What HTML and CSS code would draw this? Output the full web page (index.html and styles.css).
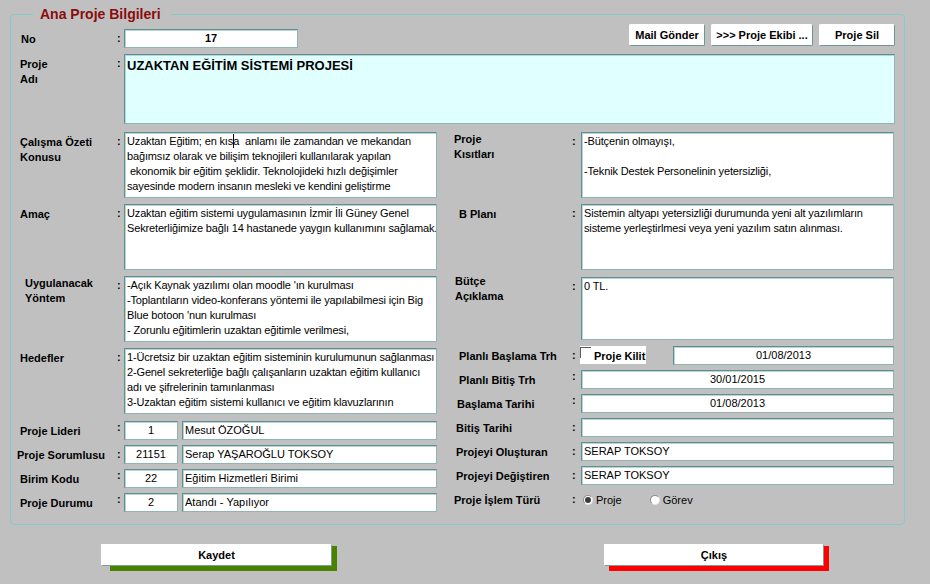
FILE: index.html
```html
<!DOCTYPE html>
<html lang="tr">
<head>
<meta charset="utf-8">
<title>Ana Proje Bilgileri</title>
<link rel="stylesheet" href="styles.css">
</head>
<body>
<div class="panel">
  <div class="legend">Ana Proje Bilgileri</div>

  <div class="toprow">
    <div class="lbl l-no">No</div>
    <div class="colon c-no">:</div>
    <div class="fld no">17</div>
    <div class="actions">
      <button class="btn b-mail">Mail Gönder</button>
      <button class="btn b-team">&gt;&gt;&gt; Proje Ekibi ...</button>
      <button class="btn b-del">Proje Sil</button>
    </div>
  </div>

  <div class="row lrow r-name">
    <div class="lbl">Proje<br>Adı</div>
    <div class="colon">:</div>
    <div class="ta name">UZAKTAN EĞİTİM SİSTEMİ PROJESİ</div>
  </div>

  <div class="cols">
    <div class="col left">
      <div class="row lrow">
        <div class="lbl">Çalışma Özeti<br>Konusu</div>
        <div class="colon">:</div>
        <div class="ta">Uzaktan Eğitim; en kıs<span class="caret"></span>a  anlamı ile zamandan ve mekandan<br>bağımsız olarak ve bilişim teknojileri kullanılarak yapılan<br> ekonomik bir eğitim şeklidir. Teknolojideki hızlı değişimler<br>sayesinde modern insanın mesleki ve kendini geliştirme</div>
      </div>
      <div class="row lrow">
        <div class="lbl">Amaç</div>
        <div class="colon">:</div>
        <div class="ta">Uzaktan eğitim sistemi uygulamasının İzmir İli Güney Genel<br>Sekreterliğimize bağlı 14 hastanede yaygın kullanımını sağlamak.</div>
      </div>
      <div class="row lrow">
        <div class="lbl ind up">Uygulanacak<br>Yöntem</div>
        <div class="colon">:</div>
        <div class="ta">-Açık Kaynak yazılımı olan moodle 'ın kurulması<br>-Toplantıların video-konferans yöntemi ile yapılabilmesi için Big<br>Blue botoon 'nun kurulması<br>- Zorunlu eğitimlerin uzaktan eğitimle verilmesi,</div>
      </div>
      <div class="row lrow">
        <div class="lbl">Hedefler</div>
        <div class="colon">:</div>
        <div class="ta">1-Ücretsiz bir uzaktan eğitim sisteminin kurulumunun sağlanması<br>2-Genel sekreterliğe bağlı çalışanların uzaktan eğitim kullanıcı<br>adı ve şifrelerinin tamınlanması<br>3-Uzaktan eğitim sistemi kullanıcı ve eğitim klavuzlarının</div>
      </div>
      <div class="group lgroup">
        <div class="srow lsrow">
          <div class="lbl">Proje Lideri</div>
          <div class="colon hi">:</div>
          <div class="fld c">1</div>
          <div class="fld">Mesut ÖZOĞUL</div>
        </div>
        <div class="srow lsrow">
          <div class="lbl out">Proje Sorumlusu</div>
          <div class="colon">:</div>
          <div class="fld c">21151</div>
          <div class="fld">Serap YAŞAROĞLU TOKSOY</div>
        </div>
        <div class="srow lsrow">
          <div class="lbl">Birim Kodu</div>
          <div class="colon hi">:</div>
          <div class="fld c">22</div>
          <div class="fld">Eğitim Hizmetleri Birimi</div>
        </div>
        <div class="srow lsrow">
          <div class="lbl">Proje Durumu</div>
          <div class="colon hi">:</div>
          <div class="fld c">2</div>
          <div class="fld">Atandı - Yapılıyor</div>
        </div>
      </div>
    </div>

    <div class="col right">
      <div class="row rrow">
        <div class="lbl up">Proje<br>Kısıtları</div>
        <div class="colon">:</div>
        <div class="ta">-Bütçenin olmayışı,<br><br>-Teknik Destek Personelinin yetersizliği,</div>
      </div>
      <div class="row rrow">
        <div class="lbl ind">B Planı</div>
        <div class="colon">:</div>
        <div class="ta">Sistemin altyapı yetersizliği durumunda yeni alt yazılımların<br>sisteme yerleştirlmesi veya yeni yazılım satın alınması.</div>
      </div>
      <div class="row rrow r-budget">
        <div class="lbl lift">Bütçe<br>Açıklama</div>
        <div class="colon">:</div>
        <div class="ta budget">0 TL.</div>
      </div>
      <div class="group rgroup">
        <div class="srow rsrow">
          <div class="lbl ind">Planlı Başlama Trh</div>
          <div class="colon">:</div>
          <div class="plan">
            <div class="kilit"><span class="chk"></span><span>Proje Kilit</span></div>
            <div class="fld c date">01/08/2013</div>
          </div>
        </div>
        <div class="srow rsrow">
          <div class="lbl ind">Planlı Bitiş Trh</div>
          <div class="colon hi">:</div>
          <div class="fld c">30/01/2015</div>
        </div>
        <div class="srow rsrow">
          <div class="lbl ind3">Başlama Tarihi</div>
          <div class="colon hi">:</div>
          <div class="fld c">01/08/2013</div>
        </div>
        <div class="srow rsrow">
          <div class="lbl ind2">Bitiş Tarihi</div>
          <div class="colon">:</div>
          <div class="fld"></div>
        </div>
        <div class="srow rsrow">
          <div class="lbl ind2">Projeyi Oluşturan</div>
          <div class="colon">:</div>
          <div class="fld">SERAP TOKSOY</div>
        </div>
        <div class="srow rsrow">
          <div class="lbl ind2">Projeyi Değiştiren</div>
          <div class="colon">:</div>
          <div class="fld">SERAP TOKSOY</div>
        </div>
        <div class="srow rsrow">
          <div class="lbl">Proje İşlem Türü</div>
          <div class="colon">:</div>
          <div class="radios">
            <span class="radio on"></span><span class="rtxt">Proje</span>
            <span class="radio gap"></span><span class="rtxt">Görev</span>
          </div>
        </div>
      </div>
    </div>
  </div>
</div>

<div class="bottom">
  <button class="bigbtn save">Kaydet</button>
  <button class="bigbtn exit">Çıkış</button>
</div>
</body>
</html>
```

FILE: styles.css
```css
* { box-sizing: border-box; }
html, body { margin: 0; padding: 0; }
body {
  background: #c0c0c0;
  font-family: "Liberation Sans", Arial, sans-serif;
  font-size: 11px;
  color: #000;
  width: 930px;
  height: 584px;
  overflow: hidden;
}

.panel {
  position: relative;
  margin: 14px 0 0 10px;
  width: 895px;
  height: 511px;
  border: 1px solid #86caca;
  border-radius: 4px;
  padding: 9px 9px 0 9px;
}
.legend {
  position: absolute;
  top: -9px;
  left: 22px;
  padding: 0 10px 0 7px;
  background: #c0c0c0;
  color: #8a0c0c;
  font-weight: bold;
  font-size: 14px;
  line-height: 16px;
}

.lbl { font-weight: bold; line-height: 15px; padding-top: 3px; white-space: nowrap; }
.colon { font-weight: bold; line-height: 15px; padding-top: 2px; }
.lbl.ind { padding-left: 5px; }
.lbl.ind2 { padding-left: 2px; }
.lbl.ind3 { padding-left: 3px; }
.lbl.out { margin-left: -3px; }
.lbl.up { padding-top: 0; }
.lbl.lift { margin-top: -3px; padding-top: 0; padding-left: 1px; }

.fld {
  height: 19px;
  background: #fff;
  border: 1px solid #8fb4b4;
  border-top-color: #5e8e8e;
  border-left-color: #5e8e8e;
  box-shadow: inset 1px 1px 0 #b8d4d4;
  line-height: 17px;
  padding: 0 2px;
  white-space: nowrap;
  overflow: hidden;
}
.fld.c { text-align: center; }

.ta {
  background: #fff;
  border: 1px solid #8fb4b4;
  border-top-color: #5e8e8e;
  border-left-color: #5e8e8e;
  box-shadow: inset 1px 1px 0 #b8d4d4;
  height: 66px;
  padding: 1px 2px;
  line-height: 15px;
  letter-spacing: -0.15px;
  white-space: pre;
  overflow: hidden;
}
.ta.name {
  height: 70px;
  background: #e0ffff;
  font-weight: bold;
  font-size: 13px;
  line-height: 18px;
  letter-spacing: 0;
  padding-top: 2px;
}
.ta.budget { height: 63px; }
.caret {
  display: inline-block;
  width: 1px;
  height: 14px;
  margin-right: -1px;
  background: #000;
  vertical-align: -3px;
}

/* top row */
.toprow { display: flex; align-items: flex-start; height: 24px; }
.l-no { width: 97px; padding-top: 8px; padding-left: 1px; }
.c-no { width: 7px; padding-top: 7px; }
.fld.no { width: 174px; margin-top: 5px; font-weight: bold; text-align: center; }
.actions { margin-left: auto; display: flex; gap: 6px; }
.btn {
  height: 22px;
  background: #fff;
  border: 1px solid #fff;
  border-right-color: #6f9696;
  border-bottom-color: #6f9696;
  border-radius: 2px;
  font-family: inherit;
  font-size: 11px;
  font-weight: bold;
  color: #000;
  padding: 0;
}
.b-mail { width: 76px; }
.b-team { width: 102px; }
.b-del { width: 76px; }

.row { display: grid; }
.lrow { grid-template-columns: 97px 7px 1fr; }
.rrow { grid-template-columns: 118px 9px 1fr; }
.r-name { margin-top: 6px; }

.cols { display: flex; gap: 17px; margin-top: 8px; }
.col { display: flex; flex-direction: column; gap: 6px; }
.col.left { width: 417px; }
.col.right { width: 440px; }
.r-budget { margin-top: 1px; }

.group { display: flex; flex-direction: column; gap: 5px; }
.lgroup { margin-top: 1px; }
.srow { display: grid; height: 19px; align-items: center; }
.srow .lbl { padding-top: 2px; }
.srow .colon { padding-top: 0; }
.srow .colon.hi { align-self: start; padding-top: 0; margin-top: -1px; }
.lsrow { grid-template-columns: 97px 7px 58px 1fr; }
.lsrow .fld.c { margin-right: 4px; }
.rsrow { grid-template-columns: 118px 9px 1fr; }

.plan { display: flex; align-items: flex-start; height: 19px; }
.kilit {
  display: flex;
  align-items: flex-start;
  width: 66px;
  height: 18px;
  margin-left: -1px;
  background: #fff;
  font-weight: bold;
  line-height: 16px;
}
.chk {
  width: 11px;
  height: 11px;
  margin: 1px 3px 0 0;
  border-top: 1px solid #5a5a5a;
  border-left: 1px solid #5a5a5a;
}
.kilit span:last-child { padding-top: 2px; }
.fld.date { width: 221px; margin-left: auto; }

.radios { display: flex; align-items: center; padding-left: 2px; padding-top: 1px; }
.radio {
  width: 10px;
  height: 10px;
  border-radius: 50%;
  background: #fff;
  border: 1px solid #8c8c8c;
  border-right-color: #e6e6e6;
  border-bottom-color: #e6e6e6;
  position: relative;
}
.radio.on::after {
  content: "";
  position: absolute;
  left: 1px;
  top: 1px;
  width: 6px;
  height: 6px;
  border-radius: 50%;
  background: #3c3c3c;
}
.radio.gap { margin-left: 28px; }
.rtxt { margin-left: 3px; }

/* bottom buttons */
.bottom { display: flex; padding: 19px 0 0 101px; gap: 272px; }
.bigbtn {
  position: relative;
  height: 22px;
  background: #fff;
  border: 1px solid #fff;
  border-right-color: #7a9c9c;
  border-bottom-color: #7a9c9c;
  font-family: inherit;
  font-size: 11px;
  font-weight: bold;
  color: #000;
  padding: 0;
}
.bigbtn::before {
  content: "";
  position: absolute;
  top: 1px;
  right: -6px;
  bottom: -6px;
  z-index: -1;
}
.bigbtn.save { width: 231px; }
.bigbtn.save::before { left: 8px; background: #4a8200; }
.bigbtn.exit { width: 220px; }
.bigbtn.exit::before { left: 4px; background: #ff0000; }
```
